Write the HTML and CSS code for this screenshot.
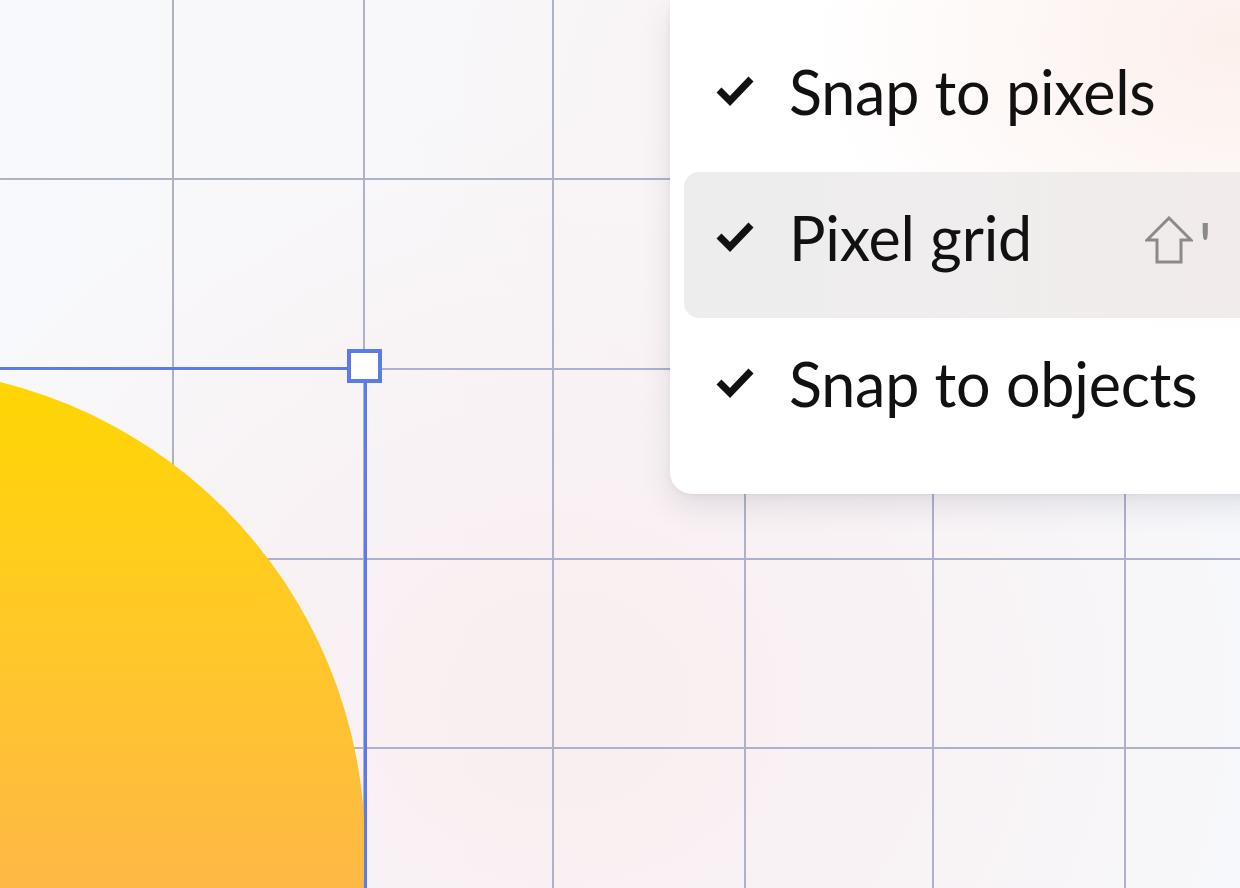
FILE: index.html
```html
<!DOCTYPE html>
<html lang="en">
<head>
    <meta charset="UTF-8">
    <title>Canvas - Snapping</title>
    <link rel="stylesheet" href="styles.css">
</head>
<body>

    <div class="canvas">
        <!-- pixel grid -->
        <svg class="grid" width="1240" height="888" viewBox="0 0 1240 888" shape-rendering="crispEdges">
            <g fill="#adb1cc">
                <rect x="172" y="0" width="2" height="888"/>
                <rect x="363" y="0" width="2" height="888"/>
                <rect x="552" y="0" width="2" height="888"/>
                <rect x="744" y="0" width="2" height="888"/>
                <rect x="932" y="0" width="2" height="888"/>
                <rect x="1124" y="0" width="2" height="888"/>
                <rect x="0" y="178" width="1240" height="2"/>
                <rect x="0" y="368" width="1240" height="2"/>
                <rect x="0" y="558" width="1240" height="2"/>
                <rect x="0" y="747" width="1240" height="2"/>
            </g>
        </svg>

        <!-- shape on the canvas -->
        <div class="shape"></div>

        <!-- selection box with its corner handle -->
        <div class="selection"></div>
        <div class="handle"></div>

        <!-- view menu -->
        <div class="menu">
            <div class="menu-item">
                <svg class="check" width="40" height="32" viewBox="0 0 40 32">
                    <polyline points="4,15 15,26 36,4" fill="none" stroke="#111" stroke-width="7"/>
                </svg>
                <span class="label">Snap to pixels</span>
            </div>
            <div class="menu-item active">
                <svg class="check" width="40" height="32" viewBox="0 0 40 32">
                    <polyline points="4,15 15,26 36,4" fill="none" stroke="#111" stroke-width="7"/>
                </svg>
                <span class="label">Pixel grid</span>
                <span class="shortcut">
                    <svg width="48" height="48" viewBox="0 0 48 48">
                        <path d="M24 2 L46 24 L36 24 L36 46 L12 46 L12 24 L2 24 Z" fill="none" stroke="#8a8a8a" stroke-width="3" stroke-linejoin="miter"/>
                    </svg>
                    <span class="key">'</span>
                </span>
            </div>
            <div class="menu-item">
                <svg class="check" width="40" height="32" viewBox="0 0 40 32">
                    <polyline points="4,15 15,26 36,4" fill="none" stroke="#111" stroke-width="7"/>
                </svg>
                <span class="label">Snap to objects</span>
            </div>
        </div>
    </div>

</body>
</html>
```

FILE: styles.css
```css
body, html {
    margin: 0;
    padding: 0;
    font-family: 'Lato', 'Open Sans', sans-serif;
    background: #f8f9fb;
}

.canvas {
    position: relative;
    width: 1240px;
    height: 888px;
    overflow: hidden;
    background:
        radial-gradient(ellipse 700px 600px at 560px 700px, #f9eef0 0%, rgba(249, 238, 240, 0.6) 45%, rgba(249, 238, 240, 0) 100%),
        radial-gradient(ellipse 600px 400px at 1000px 100px, #faf1f0 0%, rgba(250, 241, 240, 0) 100%),
        linear-gradient(to right, #f8f9fc 0%, #f8f7f9 50%, #f7f8fb 100%);
}

.grid {
    position: absolute;
    left: 0;
    top: 0;
}

.shape {
    position: absolute;
    left: -595px;
    top: 368px;
    width: 960px;
    height: 960px;
    border-radius: 50%;
    background: linear-gradient(180deg, #ffd600 0%, #ffca25 25%, #feb846 54%, #ffa860 100%);
}

.selection {
    position: absolute;
    left: -600px;
    top: 367px;
    width: 961px;
    height: 800px;
    border: 3px solid #5b7be6;
}

.handle {
    position: absolute;
    left: 347px;
    top: 349px;
    width: 35px;
    height: 34px;
    box-sizing: border-box;
    border: 4px solid #5b7be6;
    background: #fff;
}

.menu {
    position: absolute;
    left: 670px;
    top: 0;
    width: 600px;
    padding: 26px 0 30px;
    border-radius: 0 0 22px 22px;
    background:
        radial-gradient(ellipse 420px 300px at 560px 40px, #fcf0ec 0%, rgba(252, 240, 236, 0) 100%),
        #fff;
    box-shadow: 0 12px 30px rgba(60, 60, 90, 0.12), 0 2px 6px rgba(60, 60, 90, 0.06);
}

.menu-item {
    display: flex;
    align-items: center;
    height: 146px;
    margin: 0 14px;
    padding: 0 44px 0 31px;
    border-radius: 15px;
    color: #111;
    font-size: 61px;
    white-space: nowrap;
}

.menu-item.active {
    background: linear-gradient(to right, #eeeded 0%, #efeded 50%, #f1ebea 100%);
}

.check {
    flex: none;
    margin-right: 34px;
    margin-top: -16px;
}

.label {
    line-height: 1;
    margin-top: -16px;
    letter-spacing: -0.2px;
}

.shortcut {
    margin-left: auto;
    display: flex;
    align-items: flex-start;
    gap: 6px;
    margin-top: 4px;
}

.key {
    color: #8a8a8a;
    font-size: 66px;
    line-height: 1;
    margin-top: -4px;
}
```
